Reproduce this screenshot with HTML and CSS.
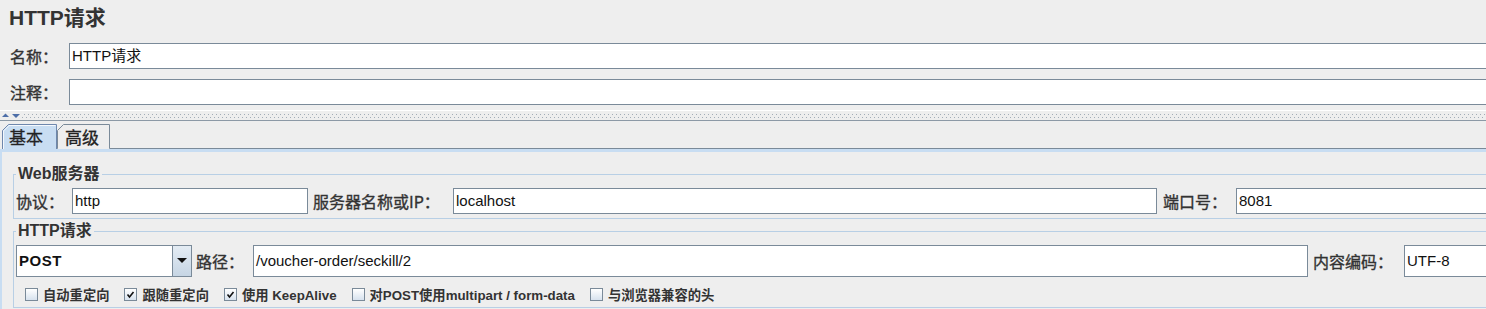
FILE: index.html
```html
<!DOCTYPE html>
<html lang="zh-CN">
<head>
<meta charset="utf-8">
<title>HTTP请求</title>
<link rel="stylesheet" href="styles.css">
</head>
<body>
<div class="page">
  <div class="title">HTTP请求</div>
  <div class="top-row">
    <span class="top-label">名称：</span>
    <div class="field edge">HTTP请求</div>
  </div>
  <div class="top-row second">
    <span class="top-label">注释：</span>
    <div class="field edge"></div>
  </div>
  <div class="splitter">
    <span class="arrows">
      <svg width="22" height="9" viewBox="0 0 22 9"><polygon points="2,6 9,6 5.5,2.5" fill="#4d6ea8"/><polygon points="12,3 20,3 16,7" fill="#4d6ea8"/></svg>
    </span>
  </div>
  <div class="tabs">
    <div class="tab active">基本</div>
    <div class="tab">高级</div>
    <div class="tab-fill"></div>
  </div>
  <div class="panel">
    <fieldset class="group first">
      <legend>Web服务器</legend>
      <div class="frow">
        <span class="lbl w-proto">协议：</span>
        <div class="field w-f1">http</div>
        <span class="lbl w-server">服务器名称或IP：</span>
        <div class="field w-f2">localhost</div>
        <span class="lbl w-port">端口号：</span>
        <div class="field edge grow">8081</div>
      </div>
    </fieldset>
    <fieldset class="group second">
      <legend>HTTP请求</legend>
      <div class="frow tall">
        <div class="combo">
          <div class="combo-value">POST</div>
          <div class="combo-btn">
            <svg width="10" height="6" viewBox="0 0 10 6"><polygon points="0,0 10,0 5,5" fill="#111"/></svg>
          </div>
        </div>
        <span class="lbl w-path">路径：</span>
        <div class="field w-pathf">/voucher-order/seckill/2</div>
        <span class="lbl w-enc">内容编码：</span>
        <div class="field edge grow">UTF-8</div>
      </div>
      <div class="checks">
        <label class="check"><span class="box"></span>自动重定向</label>
        <label class="check"><span class="box"><svg width="11" height="11" viewBox="0 0 11 11"><path d="M2.5 5.5 L4.5 8 L8.5 3" fill="none" stroke="#111" stroke-width="1.6"/></svg></span>跟随重定向</label>
        <label class="check"><span class="box"><svg width="11" height="11" viewBox="0 0 11 11"><path d="M2.5 5.5 L4.5 8 L8.5 3" fill="none" stroke="#111" stroke-width="1.6"/></svg></span>使用 KeepAlive</label>
        <label class="check"><span class="box"></span>对POST使用multipart / form-data</label>
        <label class="check"><span class="box"></span>与浏览器兼容的头</label>
      </div>
    </fieldset>
  </div>
</div>
</body>
</html>
```
FILE: styles.css
```css
html, body {
  margin: 0;
  padding: 0;
  background: #eeeeee;
  overflow: hidden;
}
body {
  font-family: "Liberation Sans", "Noto Sans CJK SC", sans-serif;
  color: #333333;
  width: 1486px;
  height: 309px;
}
.page {
  display: flex;
  flex-direction: column;
}
.title {
  height: 43px;
  line-height: 36px;
  padding-left: 9px;
  font-size: 21px;
  font-weight: bold;
  color: #333;
}
.top-row {
  display: flex;
  align-items: center;
  height: 26px;
  padding-left: 10px;
}
.top-row.second {
  margin-top: 10px;
}
.top-label {
  width: 59px;
  font-size: 16px;
  font-family: "Noto Sans CJK SC", sans-serif;
  -webkit-text-stroke: 0.35px #333;
}
.field {
  box-sizing: border-box;
  height: 26px;
  background: #ffffff;
  border: 1px solid #7a8a99;
  font-size: 15px;
  line-height: 24px;
  padding-left: 2px;
  color: #111;
  white-space: nowrap;
  overflow: hidden;
}
.top-row .field {
  flex: 1;
}
.field.edge {
  border-right: none;
}
.splitter {
  margin-top: 5px;
  height: 9px;
  border-top: 1px solid #ffffff;
  border-bottom: 1px solid #8c99a6;
  display: flex;
  background:
    linear-gradient(90deg, #a2acb7 1px, transparent 1px) 0 3px / 4px 1px repeat-x,
    linear-gradient(90deg, #a2acb7 1px, transparent 1px) 2px 6px / 4px 1px repeat-x;
}
.arrows {
  display: flex;
  background: #eeeeee;
  width: 22px;
  height: 9px;
}
.tabs {
  display: flex;
  align-items: flex-end;
  height: 28px;
  padding-left: 2px;
}
.tab {
  box-sizing: border-box;
  height: 25px;
  font-size: 17px;
  font-family: "Noto Sans CJK SC", sans-serif;
  line-height: 25px;
  color: #222;
  background-repeat: no-repeat;
  -webkit-text-stroke: 0.3px #222;
}
.tab.active {
  width: 55px;
  padding-left: 7px;
  background-image: url("data:image/svg+xml,%3Csvg xmlns='http://www.w3.org/2000/svg' width='55' height='25'%3E%3Cpath d='M0.5 25 L0.5 6.5 L6.5 0.5 L54.5 0.5 L54.5 25' fill='%23c8ddf2' stroke='%236e87ad'/%3E%3Cpath d='M1.5 25 L1.5 7 L7 1.5 L53.5 1.5' fill='none' stroke='%23ffffff' stroke-opacity='0.8'/%3E%3C/svg%3E");
}
.tab:not(.active) {
  width: 53px;
  padding-left: 8px;
  background-image: url("data:image/svg+xml,%3Csvg xmlns='http://www.w3.org/2000/svg' width='53' height='25'%3E%3Cpath d='M0 24.5 L0.5 24.5 L0.5 6.5 L6.5 0.5 L52.5 0.5 L52.5 24.5 L53 24.5' fill='%23eeeeee' stroke='%237a8a99'/%3E%3C/svg%3E");
}
.tab-fill {
  flex: 1;
  height: 25px;
  box-sizing: border-box;
  border-bottom: 1px solid #7a8a99;
}
.panel {
  border-top: 3px solid #c8ddf2;
  border-left: 2px solid #c8ddf2;
  height: 160px;
}
.group {
  margin: 0 0 0 11px;
  padding: 4px 0 4px 2px;
  border: 1px solid #b8cfe5;
  border-right: none;
  min-width: 0;
}
.group.first {
  margin-top: 12px;
}
.group.second {
  margin-top: 2px;
}
.group legend {
  padding: 0 2px;
  font-size: 16px;
  line-height: 20px;
  font-weight: bold;
  color: #333;
}
.frow {
  display: flex;
  align-items: center;
  height: 26px;
}
.frow.tall {
  height: 32px;
}
.frow.tall .field {
  height: 32px;
  line-height: 30px;
}
.lbl {
  box-sizing: border-box;
  font-size: 16px;
  font-family: "Noto Sans CJK SC", sans-serif;
  white-space: nowrap;
  -webkit-text-stroke: 0.35px #333;
}
.w-proto { width: 56px; }
.w-f1 { width: 236px; }
.w-server { width: 145px; padding-left: 5px; }
.w-f2 { width: 704px; }
.w-port { width: 79px; padding-left: 6px; }
.w-path { width: 61px; padding-left: 4px; }
.w-pathf { width: 1055px; }
.w-enc { width: 96px; padding-left: 5px; }
.grow { flex: 1; }
.combo {
  display: flex;
  width: 176px;
  height: 32px;
  box-sizing: border-box;
  border: 1px solid #7a8a99;
  background: #ffffff;
}
.combo-value {
  flex: 1;
  padding-left: 2px;
  font-size: 15px;
  font-weight: bold;
  line-height: 30px;
  color: #111;
  letter-spacing: 0.5px;
}
.combo-btn {
  width: 19px;
  box-sizing: border-box;
  border-left: 1px solid #7a8a99;
  background: linear-gradient(#e4ecf4, #c6d5e4);
  display: flex;
  align-items: center;
  justify-content: center;
}
.checks {
  display: flex;
  align-items: center;
  gap: 15px;
  height: 18px;
  margin-top: 8px;
  padding-left: 9px;
}
.check {
  display: flex;
  align-items: center;
  gap: 5px;
  font-size: 13.3px;
  font-weight: bold;
  color: #333;
  white-space: nowrap;
}
.box {
  box-sizing: border-box;
  width: 13px;
  height: 13px;
  border: 1px solid #7a8a99;
  background: linear-gradient(#ffffff, #d7e2ee);
  display: flex;
  align-items: center;
  justify-content: center;
}
```
